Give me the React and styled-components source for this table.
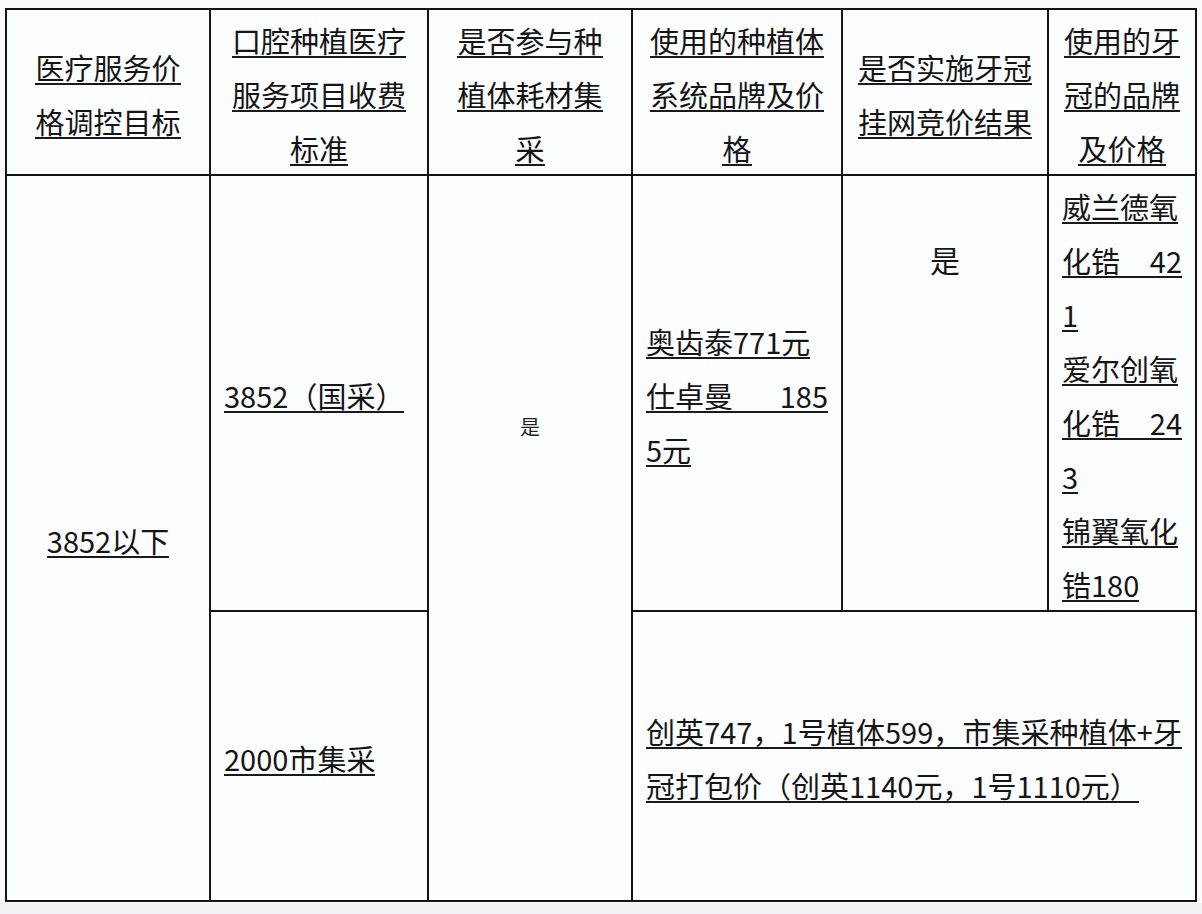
import React from "react";
import styled, { createGlobalStyle } from "styled-components";

const Global = createGlobalStyle`
  html, body {
    margin: 0;
    padding: 0;
    background: #fcfcfd;
  }
  body {
    font-family: "Liberation Sans Narrow", "Noto Sans CJK SC", sans-serif;
    color: #151515;
  }
`;

const Page = styled.div`
  width: 1202px;
  height: 914px;
  box-sizing: border-box;
  padding: 8px 0 0 5px;
  background: linear-gradient(to bottom, #fcfcfd 0, #fcfcfd 903px, #f1f2f5 903px);
`;

const Table = styled.div`
  display: grid;
  grid-template-columns: 202px 216px 202px 208px 204px 146px;
  grid-template-rows: 164px 434px 288px;
  gap: 2px;
  padding: 2px;
  background: #141414;
  width: max-content;
`;

const Cell = styled.div`
  background: #fcfdfe;
  box-sizing: border-box;
  display: flex;
  flex-direction: column;
  gap: 22px;
  padding: 8px 13px 0;
  justify-content: ${(p) => (p.$v === "top" ? "flex-start" : "center")};
  align-items: ${(p) => (p.$h === "center" ? "center" : "flex-start")};
  grid-column: ${(p) => p.$col || "auto"};
  grid-row: ${(p) => p.$row || "auto"};
  font-size: 29px;
`;

const Line = styled.span`
  display: ${(p) => (p.$mode === "split" ? "flex" : p.$mode === "justify" ? "block" : "inline-block")};
  justify-content: space-between;
  align-self: ${(p) => (p.$mode ? "stretch" : "auto")};
  text-align: ${(p) => (p.$mode === "justify" ? "justify" : "left")};
  text-align-last: ${(p) => (p.$mode === "justify" ? "justify" : "auto")};
  line-height: 29px;
  height: 29px;
  padding-bottom: 1px;
  border-bottom: 2px solid #1a1a1a;
  white-space: nowrap;
`;

const Mark = styled.span`
  display: block;
  align-self: center;
  font-family: "Noto Sans CJK SC", sans-serif;
  font-size: ${(p) => p.$size}px;
  line-height: ${(p) => p.$size}px;
  margin-top: ${(p) => p.$top}px;
  color: ${(p) => p.$color || "#151515"};
`;

const Lines = ({ items }) =>
  items.map((t, i) =>
    Array.isArray(t) ? (
      <Line key={i} $mode="split">
        <span>{t[0]}</span>
        <span>{t[1]}</span>
      </Line>
    ) : typeof t === "object" ? (
      <Line key={i} $mode="justify">
        {t.text}
      </Line>
    ) : (
      <Line key={i}>{t}</Line>
    )
  );

const headers = [
  ["医疗服务价", "格调控目标"],
  ["口腔种植医疗", "服务项目收费", "标准"],
  ["是否参与种", "植体耗材集", "采"],
  ["使用的种植体", "系统品牌及价", "格"],
  ["是否实施牙冠", "挂网竞价结果"],
  ["使用的牙", "冠的品牌", "及价格"],
];

export default function App() {
  return (
    <>
      <Global />
      <Page>
        <Table>
          {headers.map((h, i) => (
            <Cell key={i} $h="center">
              <Lines items={h} />
            </Cell>
          ))}

          <Cell $h="center" $col="1" $row="2 / 4">
            <Lines items={["3852以下"]} />
          </Cell>

          <Cell $col="2" $row="2">
            <Lines items={["3852（国采）"]} />
          </Cell>

          <Cell $v="top" $col="3" $row="2 / 4">
            <Mark $size={20} $top={233} $color="#222">是</Mark>
          </Cell>

          <Cell $col="4" $row="2">
            <Lines items={["奥齿泰771元", ["仕卓曼", "185"], "5元"]} />
          </Cell>

          <Cell $v="top" $col="5" $row="2">
            <Mark $size={30} $top={60}>是</Mark>
          </Cell>

          <Cell $col="6" $row="2">
            <Lines
              items={[
                "威兰德氧",
                ["化锆", "42"],
                "1",
                "爱尔创氧",
                ["化锆", "24"],
                "3",
                "锦翼氧化",
                "锆180",
              ]}
            />
          </Cell>

          <Cell $col="2" $row="3">
            <Lines items={["2000市集采"]} />
          </Cell>

          <Cell $col="4 / 7" $row="3">
            <Lines
              items={[
                { text: "创英747，1号植体599，市集采种植体+牙" },
                "冠打包价（创英1140元，1号1110元）",
              ]}
            />
          </Cell>
        </Table>
      </Page>
    </>
  );
}
